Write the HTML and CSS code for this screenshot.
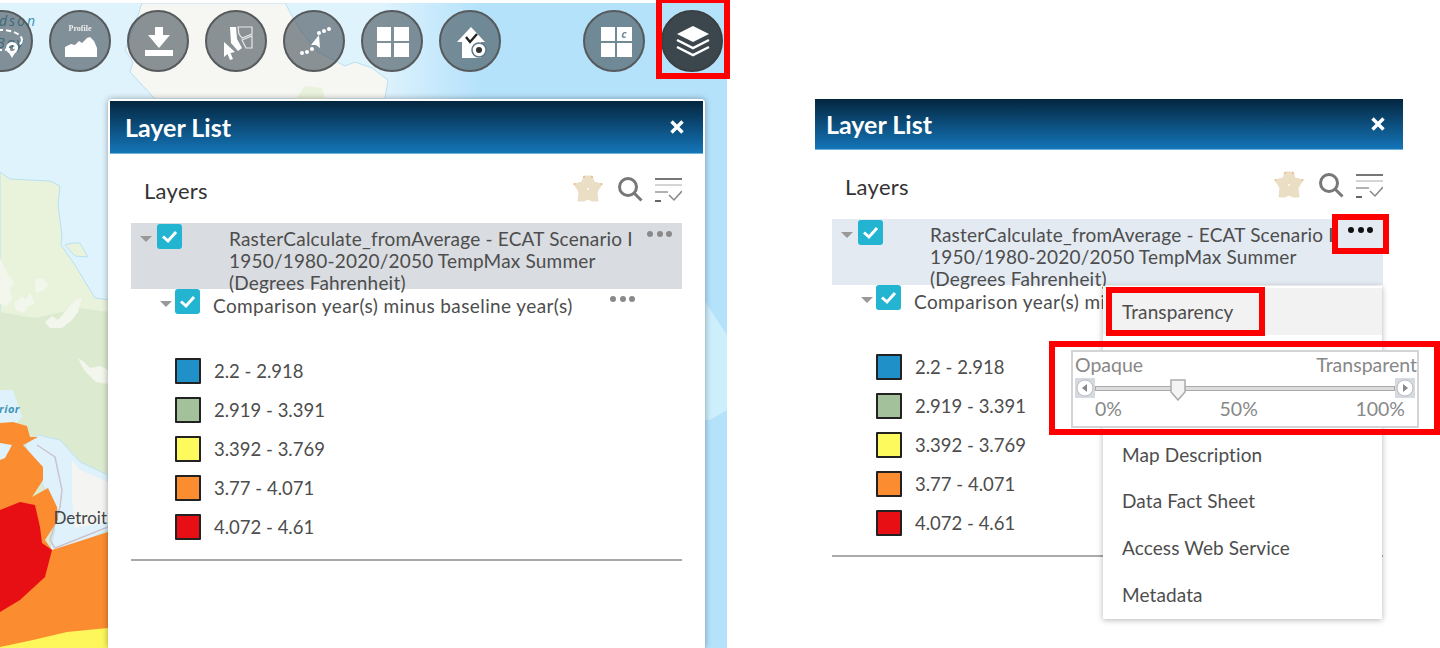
FILE: index.html
```html
<!DOCTYPE html>
<html lang="en">
<head>
    <meta charset="UTF-8">
    <meta name="viewport" content="width=device-width, initial-scale=1.0">
    <title>Layer List</title>
    <link rel="stylesheet" href="styles.css">
</head>
<body>
    <div class="page">
        <!-- left shot: map with widget buttons and the open panel -->
        <section class="map-shot">
            <svg class="map-bg" viewBox="0 3 727 645" preserveAspectRatio="none">
                <defs>
                    <linearGradient id="seaFade" x1="380" y1="0" x2="480" y2="0" gradientUnits="userSpaceOnUse">
                        <stop offset="0" stop-color="#dff3fd"/>
                        <stop offset="1" stop-color="#b5e2fb"/>
                    </linearGradient>
                </defs>
                <rect x="0" y="3" width="727" height="645" fill="url(#seaFade)"/>
                <polygon points="142,3 137,18 125,50 133,62 130,72 155,99 385,99 388,80 372,68 355,62 345,66 318,52 300,30 285,3" fill="#f6f6f3" stroke="#b9e0f2"/>
                <polygon points="296,99 305,86 322,88 325,99" fill="#e9f2dc"/>
                <polygon points="704,300 727,335 727,410 710,420 704,420" fill="#cdeefb"/>
                <polygon points="0,172 10,179 30,180 50,181 60,186 58,205 62,235 61,245 68,255 75,265 90,290 95,298 110,300 110,648 0,648" fill="#e9f3dc" stroke="#b9e0f2"/>
                <polygon points="0,312 35,318 80,308 110,312 110,648 0,648" fill="#dcebd0"/>
                <polygon points="65,245 72,243 80,243 88,257 75,256" fill="#e9f3dc" stroke="#b9e0f2"/>
                <polygon points="0,258 5,268 8,275 14,282 10,288 12,300 6,306 0,304" fill="#f3f6ec"/>
                <polygon points="14,303 22,296 26,300 30,292 35,304 28,306 24,313 16,310" fill="#f3f6ec"/>
                <polygon points="35,280 42,278 48,284 52,280 44,290 36,293" fill="#f3f6ec"/>
                <polygon points="45,322 52,316 58,320 68,308 75,300 82,298 78,312 72,320 62,328 50,328" fill="#f3f6ec"/>
                <polygon points="78,358 84,362 90,368 100,366 108,370 108,384 96,382 90,376 84,370" fill="#f3f6ec"/>
                <polygon points="0,390 13,390 22,417 13,427 0,422" fill="#dff2fb"/>
                <polygon points="25,445 38,435 60,440 80,462 108,475 108,530 70,548 48,555 55,530 45,490" fill="#dff2fb" stroke="#bfe3f3"/>
                <polygon points="72,460 80,470 108,482 108,522 75,528 72,500" fill="#f4f5f2"/>
                <polyline points="37,445 55,457 62,490 60,507 50,540 55,548 108,527" fill="none" stroke="#cbc4d0" stroke-width="1.5"/>
                <polygon points="0,423 13,422 27,426 30,437 38,437 23,445 43,467 43,480 32,497 48,488 57,507 58,520 45,540 52,550 108,532 108,648 0,648" fill="#fb8c30"/>
                <polygon points="0,443 12,445 5,458 0,460" fill="#dff2fb"/>
                <polygon points="0,510 20,502 35,505 40,527 42,543 52,550 45,577 20,600 0,612" fill="#e80f14"/>
                <polygon points="0,647 33,640 67,632 108,628 108,648 0,648" fill="#fdf75b"/>
                <text class="map-label" x="37" y="26" text-anchor="end">Hudson</text>
                <text class="map-label" x="25" y="48" text-anchor="end">Bay</text>
                <text class="map-label map-label-small" x="20" y="413" text-anchor="end">Superior</text>
                <text class="map-city" x="107" y="524" text-anchor="end">Detroit</text>
            </svg>

            <div class="toolbar">
                <div class="tool-btn">
                    <svg viewBox="0 0 62 62"><ellipse cx="30" cy="30" rx="21" ry="10" fill="none" stroke="#fff" stroke-width="2" stroke-dasharray="5 3"/><circle cx="41" cy="38" r="4.5" fill="none" stroke="#fff" stroke-width="3"/><path d="M37 41 L41 48 L45 41 Z" fill="#fff"/></svg>
                </div>
                <div class="tool-btn">
                    <svg viewBox="0 0 62 62"><text class="profile-word" x="31" y="21" text-anchor="middle">Profile</text><polygon points="16,47 16,37 22,34 26,35 30,31 33,33 38,28 41,27 45,31 48,38 48,47" fill="#fff"/></svg>
                </div>
                <div class="tool-btn">
                    <svg viewBox="0 0 62 62"><path d="M28 17 H36 V25 H43 L32 38 L21 25 H28 Z" fill="#fff"/><path d="M18 40 H46 V46 H18 Z" fill="#fff"/></svg>
                </div>
                <div class="tool-btn">
                    <svg viewBox="0 0 62 62"><path d="M25 17 H31 L32 29 L37 38 L33 41 L26 33 Z" fill="#fff"/><path d="M33 17 H47 V24 L37 28 L34 24 Z M37 30 L47 26 V38 L41 38 Z" fill="none" stroke="#e8e8e8" stroke-width="1.2"/><path d="M19 32 L30 42 L25.500 43 L28 49 L25 50 L22.500 44 L19 47 Z" fill="#fff"/></svg>
                </div>
                <div class="tool-btn">
                    <svg viewBox="0 0 62 62" fill="#fff"><circle cx="19" cy="43" r="2"/><circle cx="24" cy="42" r="2"/><circle cx="29" cy="39" r="2"/><path d="M36 25 L37 38 L33 35 L28 35 Z"/><circle cx="36" cy="23" r="2"/><circle cx="41" cy="21" r="2"/><circle cx="46" cy="19" r="2"/></svg>
                </div>
                <div class="tool-btn">
                    <svg viewBox="0 0 62 62" fill="#fff"><rect x="16" y="17" width="14" height="14"/><rect x="33" y="17" width="15" height="14"/><rect x="16" y="33" width="14" height="14"/><rect x="33" y="33" width="15" height="14"/></svg>
                </div>
                <div class="tool-btn">
                    <svg viewBox="0 0 62 62"><path d="M32 17 L46 32 H42 V48 H23 V32 H18 Z" fill="#fff"/><path d="M27 27 L31 32 L38 24" fill="none" stroke="#222" stroke-width="2.4"/><circle cx="40" cy="40" r="7" fill="#fff" stroke="#5f7885" stroke-width="1.5"/><circle cx="40" cy="40" r="3" fill="#333"/></svg>
                </div>
                <div class="tool-btn tool-btn-far">
                    <svg viewBox="0 0 62 62" fill="#fff"><rect x="18" y="17" width="14" height="14"/><rect x="34" y="17" width="15" height="14"/><rect x="18" y="33" width="14" height="14"/><rect x="34" y="33" width="15" height="14"/><text class="grid-letter" x="41" y="28" text-anchor="middle">c</text></svg>
                </div>
                <div class="tool-btn tool-btn-active">
                    <svg viewBox="0 0 62 62"><path d="M32 16 L48 24 L32 32 L16 24 Z" fill="#fff"/><path d="M16 30 L32 38 L48 30" fill="none" stroke="#fff" stroke-width="2.5"/><path d="M16 37 L32 45 L48 37" fill="none" stroke="#fff" stroke-width="2.5"/></svg>
                </div>
            </div>

            <div class="red-frame frame-layers"></div>

            <div class="panel panel-map">
                <div class="panel-head">
                    <span class="panel-title">Layer List</span>
                    <svg class="close-icon" viewBox="0 0 14 14"><path d="M1.5 1.5 L12.5 12.5 M12.5 1.5 L1.5 12.5" stroke="#fff" stroke-width="3.4"/></svg>
                </div>
                <div class="panel-body">
                    <div class="tools-row">
                        <span class="tools-label">Layers</span>
                        <svg class="star-icon" viewBox="0 0 30 28"><path d="M11 1 H19 L21 7 L29 9 L24 17 L25 26 H19 L15 24 L11 26 H5 L6 17 L1 9 L9 7 Z" fill="#eadfc4" stroke="#eadfc4" stroke-linejoin="round"/><circle cx="15" cy="14" r="1" fill="#fff"/><circle cx="11" cy="2" r="1" fill="#f2b68a"/><circle cx="19" cy="2" r="1" fill="#f2b68a"/><circle cx="1.500" cy="9" r="1" fill="#f2b68a"/><circle cx="28.500" cy="9" r="1" fill="#f2b68a"/></svg>
                        <svg class="search-icon" viewBox="0 0 26 26"><circle cx="11" cy="11" r="8.5" fill="none" stroke="#777" stroke-width="3"/><path d="M17 17 L24.500 24.500" stroke="#777" stroke-width="3"/></svg>
                        <svg class="filter-icon" viewBox="0 0 28 24"><path d="M1 1 H28" stroke="#777" stroke-width="2"/><path d="M1 7 H28" stroke="#aaa" stroke-width="1"/><path d="M1 14 H14" stroke="#999" stroke-width="1.500"/><path d="M1 23 H7" stroke="#666" stroke-width="2"/><path d="M15 17 L20 22 L28 13" fill="none" stroke="#888" stroke-width="1.500"/></svg>
                    </div>
                    <div class="layer-row layer-row-top row-selected-grey">
                        <span class="tree-arrow"></span>
                        <span class="check"><svg viewBox="0 0 25 25"><path d="M6 12.500 L11 17 L19 8" fill="none" stroke="#fff" stroke-width="3"/></svg></span>
                        <div class="layer-title">RasterCalculate_fromAverage - ECAT Scenario I<br>1950/1980-2020/2050 TempMax Summer<br>(Degrees Fahrenheit)</div>
                        <span class="dots"><i></i><i></i><i></i></span>
                    </div>
                    <div class="layer-row layer-row-sub">
                        <span class="tree-arrow"></span>
                        <span class="check"><svg viewBox="0 0 25 25"><path d="M6 12.500 L11 17 L19 8" fill="none" stroke="#fff" stroke-width="3"/></svg></span>
                        <div class="sub-title">Comparison year(s) minus baseline year(s)</div>
                        <span class="dots"><i></i><i></i><i></i></span>
                    </div>
                    <ul class="legend">
                        <li><span class="swatch swatch-blue"></span>2.2 - 2.918</li>
                        <li><span class="swatch swatch-green"></span>2.919 - 3.391</li>
                        <li><span class="swatch swatch-yellow"></span>3.392 - 3.769</li>
                        <li><span class="swatch swatch-orange"></span>3.77 - 4.071</li>
                        <li><span class="swatch swatch-red"></span>4.072 - 4.61</li>
                    </ul>
                    <div class="tree-rule"></div>
                </div>
            </div>
        </section>

        <!-- right shot: same panel with the layer menu open -->
        <section class="plain-shot">
            <div class="panel panel-plain">
                <div class="panel-head">
                    <span class="panel-title">Layer List</span>
                    <svg class="close-icon" viewBox="0 0 14 14"><path d="M1.5 1.5 L12.5 12.5 M12.5 1.5 L1.5 12.5" stroke="#fff" stroke-width="3.4"/></svg>
                </div>
                <div class="panel-body">
                    <div class="tools-row">
                        <span class="tools-label">Layers</span>
                        <svg class="star-icon" viewBox="0 0 30 28"><path d="M11 1 H19 L21 7 L29 9 L24 17 L25 26 H19 L15 24 L11 26 H5 L6 17 L1 9 L9 7 Z" fill="#eadfc4" stroke="#eadfc4" stroke-linejoin="round"/><circle cx="15" cy="14" r="1" fill="#fff"/><circle cx="11" cy="2" r="1" fill="#f2b68a"/><circle cx="19" cy="2" r="1" fill="#f2b68a"/><circle cx="1.500" cy="9" r="1" fill="#f2b68a"/><circle cx="28.500" cy="9" r="1" fill="#f2b68a"/></svg>
                        <svg class="search-icon" viewBox="0 0 26 26"><circle cx="11" cy="11" r="8.5" fill="none" stroke="#777" stroke-width="3"/><path d="M17 17 L24.500 24.500" stroke="#777" stroke-width="3"/></svg>
                        <svg class="filter-icon" viewBox="0 0 28 24"><path d="M1 1 H28" stroke="#777" stroke-width="2"/><path d="M1 7 H28" stroke="#aaa" stroke-width="1"/><path d="M1 14 H14" stroke="#999" stroke-width="1.500"/><path d="M1 23 H7" stroke="#666" stroke-width="2"/><path d="M15 17 L20 22 L28 13" fill="none" stroke="#888" stroke-width="1.500"/></svg>
                    </div>
                    <div class="layer-row layer-row-top row-selected-blue">
                        <span class="tree-arrow"></span>
                        <span class="check"><svg viewBox="0 0 25 25"><path d="M6 12.500 L11 17 L19 8" fill="none" stroke="#fff" stroke-width="3"/></svg></span>
                        <div class="layer-title">RasterCalculate_fromAverage - ECAT Scenario I<br>1950/1980-2020/2050 TempMax Summer<br>(Degrees Fahrenheit)</div>
                        <span class="dots dots-dark"><i></i><i></i><i></i></span>
                    </div>
                    <div class="layer-row layer-row-sub">
                        <span class="tree-arrow"></span>
                        <span class="check"><svg viewBox="0 0 25 25"><path d="M6 12.500 L11 17 L19 8" fill="none" stroke="#fff" stroke-width="3"/></svg></span>
                        <div class="sub-title">Comparison year(s) minus baseline year(s)</div>
                    </div>
                    <ul class="legend">
                        <li><span class="swatch swatch-blue"></span>2.2 - 2.918</li>
                        <li><span class="swatch swatch-green"></span>2.919 - 3.391</li>
                        <li><span class="swatch swatch-yellow"></span>3.392 - 3.769</li>
                        <li><span class="swatch swatch-orange"></span>3.77 - 4.071</li>
                        <li><span class="swatch swatch-red"></span>4.072 - 4.61</li>
                    </ul>
                    <div class="tree-rule"></div>
                </div>

                <div class="layer-menu">
                    <div class="menu-item menu-item-active">Transparency</div>
                    <div class="menu-spacer"></div>
                    <div class="menu-item">Map Description</div>
                    <div class="menu-item">Data Fact Sheet</div>
                    <div class="menu-item">Access Web Service</div>
                    <div class="menu-item">Metadata</div>
                </div>

                <div class="slider-box">
                    <div class="slider-ends"><span>Opaque</span><span>Transparent</span></div>
                    <div class="slider-track">
                        <span class="slider-step"><svg viewBox="0 0 20 20"><circle cx="10" cy="10" r="8" fill="#fff" stroke="#bbb"/><path d="M12 6 L7 10 L12 14 Z" fill="#888"/></svg></span>
                        <span class="slider-line"></span>
                        <svg class="slider-thumb" viewBox="0 0 16 22"><path d="M1 1 H15 V13 L8 21 L1 13 Z" fill="#f4f4f4" stroke="#aaa" stroke-width="1.500"/></svg>
                        <span class="slider-step"><svg viewBox="0 0 20 20"><circle cx="10" cy="10" r="8" fill="#fff" stroke="#bbb"/><path d="M8 6 L13 10 L8 14 Z" fill="#888"/></svg></span>
                    </div>
                    <div class="slider-marks"><span>0%</span><span>50%</span><span>100%</span></div>
                </div>

                <div class="red-frame frame-dots"></div>
                <div class="red-frame frame-transparency"></div>
                <div class="red-frame frame-slider"></div>
            </div>
        </section>
    </div>
</body>
</html>
```

FILE: styles.css
```css
* {
    box-sizing: border-box;
}

body {
    margin: 0;
    background: #fff;
    font-family: 'Lato', 'Open Sans', sans-serif;
    color: #4d4d4d;
}

.page {
    display: flex;
    width: 1440px;
    height: 648px;
    overflow: hidden;
}

/* map side */
.map-shot {
    position: relative;
    flex: 0 0 727px;
    height: 648px;
}

.map-bg {
    position: absolute;
    left: 0;
    top: 3px;
    width: 727px;
    height: 645px;
}

.map-label {
    font-family: 'Open Sans', sans-serif;
    font-style: italic;
    font-size: 14px;
    letter-spacing: 2px;
    fill: #3f93b8;
}

.map-label-small {
    font-size: 11px;
    font-weight: bold;
    letter-spacing: 0.5px;
}

.map-city {
    font-size: 17px;
    fill: #444;
}

.toolbar {
    position: relative;
    display: flex;
    gap: 16px;
    margin-left: -29px;
    padding-top: 10px;
}

.tool-btn {
    flex: 0 0 62px;
    width: 62px;
    height: 62px;
    border: 2px solid #565a5c;
    border-radius: 50%;
    background: rgba(60, 72, 80, 0.58);
    overflow: hidden;
}

.tool-btn svg {
    display: block;
    width: 62px;
    height: 62px;
    margin: -2px;
    filter: blur(0.4px);
}

.tool-btn-far {
    margin-left: 66px;
}

.tool-btn-active {
    background: #3c474d;
    border-color: #3a3f42;
}

.profile-word {
    font-family: 'Liberation Serif', serif;
    font-size: 8px;
    font-weight: bold;
    fill: #eee;
}

.grid-letter {
    font-family: 'Open Sans', sans-serif;
    font-size: 11px;
    font-style: italic;
    font-weight: bold;
    fill: #6d8a99;
}

/* panel */
.panel {
    background: #fff;
}

.panel-map {
    position: absolute;
    left: 108px;
    top: 99px;
    width: 597px;
    height: 549px;
    border: 2px solid #fff;
    border-radius: 4px 4px 0 0;
    box-shadow: 0 0 6px rgba(0, 0, 0, 0.35);
}

.plain-shot {
    flex: 1;
    padding: 99px 0 0 88px;
}

.panel-plain {
    position: relative;
    width: 588px;
}

.panel-head {
    display: flex;
    align-items: center;
    justify-content: space-between;
    height: 53px;
    padding: 0 19px 0 15px;
    background: linear-gradient(#04263f, #1475b8);
    border-bottom: 1px solid #6fb2dc;
}

.panel-plain .panel-head {
    height: 51px;
    padding: 0 18px 0 11px;
}

.panel-title {
    color: #fff;
    font-size: 25px;
    font-weight: bold;
}

.close-icon {
    width: 14px;
    height: 14px;
}

.panel-body {
    width: 551px;
    margin-left: 21px;
}

.panel-plain .panel-body {
    margin-left: 17px;
}

.tools-row {
    display: flex;
    align-items: center;
    height: 36px;
    margin-bottom: 15px;
    margin-top: 18px;
    padding-left: 13px;
}

.tools-label {
    flex: 1;
    font-size: 22px;
    letter-spacing: 0.3px;
    color: #333;
}

.star-icon {
    width: 30px;
    height: 28px;
    margin: -3px 14px 0 0;
}

.search-icon {
    width: 26px;
    height: 26px;
    margin: -2px 11px 0 0;
}

.filter-icon {
    width: 28px;
    height: 24px;
}

.layer-row {
    position: relative;
    display: flex;
    align-items: flex-start;
}

.layer-row-top {
    height: 66px;
    padding: 1px 10px 0 9px;
}

.row-selected-grey {
    background: #d9dce0;
}

.row-selected-blue {
    background: #e3eaf2;
}

.layer-row-sub {
    height: 69px;
    padding-left: 29px;
}

.tree-arrow {
    width: 0;
    height: 0;
    margin: 12px 5px 0 0;
    border-left: 6px solid transparent;
    border-right: 6px solid transparent;
    border-top: 6px solid #999;
}

.layer-row-sub .tree-arrow {
    margin-right: 3px;
}

.check {
    flex: 0 0 25px;
    height: 25px;
    border-radius: 3px;
    background: #22b4d1;
}

.check svg {
    display: block;
}

.layer-title {
    flex: 1;
    margin: 4px 0 0 47px;
    font-size: 19px;
    letter-spacing: 0.2px;
    line-height: 22px;
    white-space: nowrap;
}

.sub-title {
    flex: 1;
    margin: 6px 0 0 13px;
    font-size: 19px;
    letter-spacing: 0.4px;
    line-height: 22px;
    white-space: nowrap;
}

.dots {
    display: flex;
    gap: 3.5px;
    margin-top: 7px;
}

.layer-row-sub .dots {
    margin-right: 47px;
}

.dots i {
    width: 6px;
    height: 6px;
    border-radius: 50%;
    background: #8a8a8a;
}

.dots-dark i {
    background: #111;
}

.legend {
    list-style: none;
    margin: 0;
    padding: 0 0 0 44px;
}

.legend li {
    display: flex;
    align-items: center;
    height: 26px;
    margin-bottom: 13px;
    font-size: 18.5px;
}

.swatch {
    flex: 0 0 26px;
    height: 26px;
    margin-right: 13px;
    border: 2px solid #222;
    border-radius: 1px;
}

.swatch-blue { background: #2090c8; }
.swatch-green { background: #a3c29b; }
.swatch-yellow { background: #fcfa5c; }
.swatch-orange { background: #fb8c30; }
.swatch-red { background: #e80f14; }

.tree-rule {
    height: 2px;
    margin-top: 19px;
    background: #aaa;
}

/* layer menu, right shot */
.layer-menu {
    position: absolute;
    left: 288px;
    top: 187px;
    width: 279px;
    padding: 2px 0;
    background: #fff;
    box-shadow: 0 1px 6px rgba(0, 0, 0, 0.3);
}

.menu-item {
    display: flex;
    align-items: center;
    height: 46.7px;
    padding-left: 19px;
    font-size: 19px;
    letter-spacing: 0.1px;
}

.menu-item-active {
    background: #f2f2f2;
}

.menu-spacer {
    height: 96px;
}

.slider-box {
    position: absolute;
    left: 256px;
    top: 251px;
    width: 348px;
    height: 78px;
    padding: 2px 0 0 2px;
    background: #fff;
    border: 2px solid #d4d4d4;
    color: #888;
    font-size: 19.5px;
}

.slider-ends {
    display: flex;
    justify-content: space-between;
    line-height: 22px;
}

.slider-track {
    position: relative;
    display: flex;
    align-items: center;
    width: 340px;
    height: 20px;
    margin-top: 2px;
}

.slider-step {
    flex: 0 0 20px;
    height: 20px;
    background: #d5d9e0;
}

.slider-step svg {
    display: block;
}

.slider-line {
    flex: 1;
    height: 5px;
    background: #ddd;
    border: 1px solid #aaa;
}

.slider-thumb {
    position: absolute;
    left: 95px;
    top: 1px;
    width: 16px;
    height: 22px;
}

.slider-marks {
    display: flex;
    justify-content: space-between;
    padding: 0 12px 0 20px;
    margin-top: 0;
    line-height: 22px;
}

.red-frame {
    position: absolute;
    border: 6px solid #f00;
}

.frame-layers {
    left: 656px;
    top: -3px;
    width: 74px;
    height: 82px;
}

.frame-dots {
    left: 517px;
    top: 115px;
    width: 57px;
    height: 40px;
}

.frame-transparency {
    left: 291px;
    top: 188px;
    width: 159px;
    height: 49px;
}

.frame-slider {
    left: 234px;
    top: 242px;
    width: 391px;
    height: 94px;
}
```
